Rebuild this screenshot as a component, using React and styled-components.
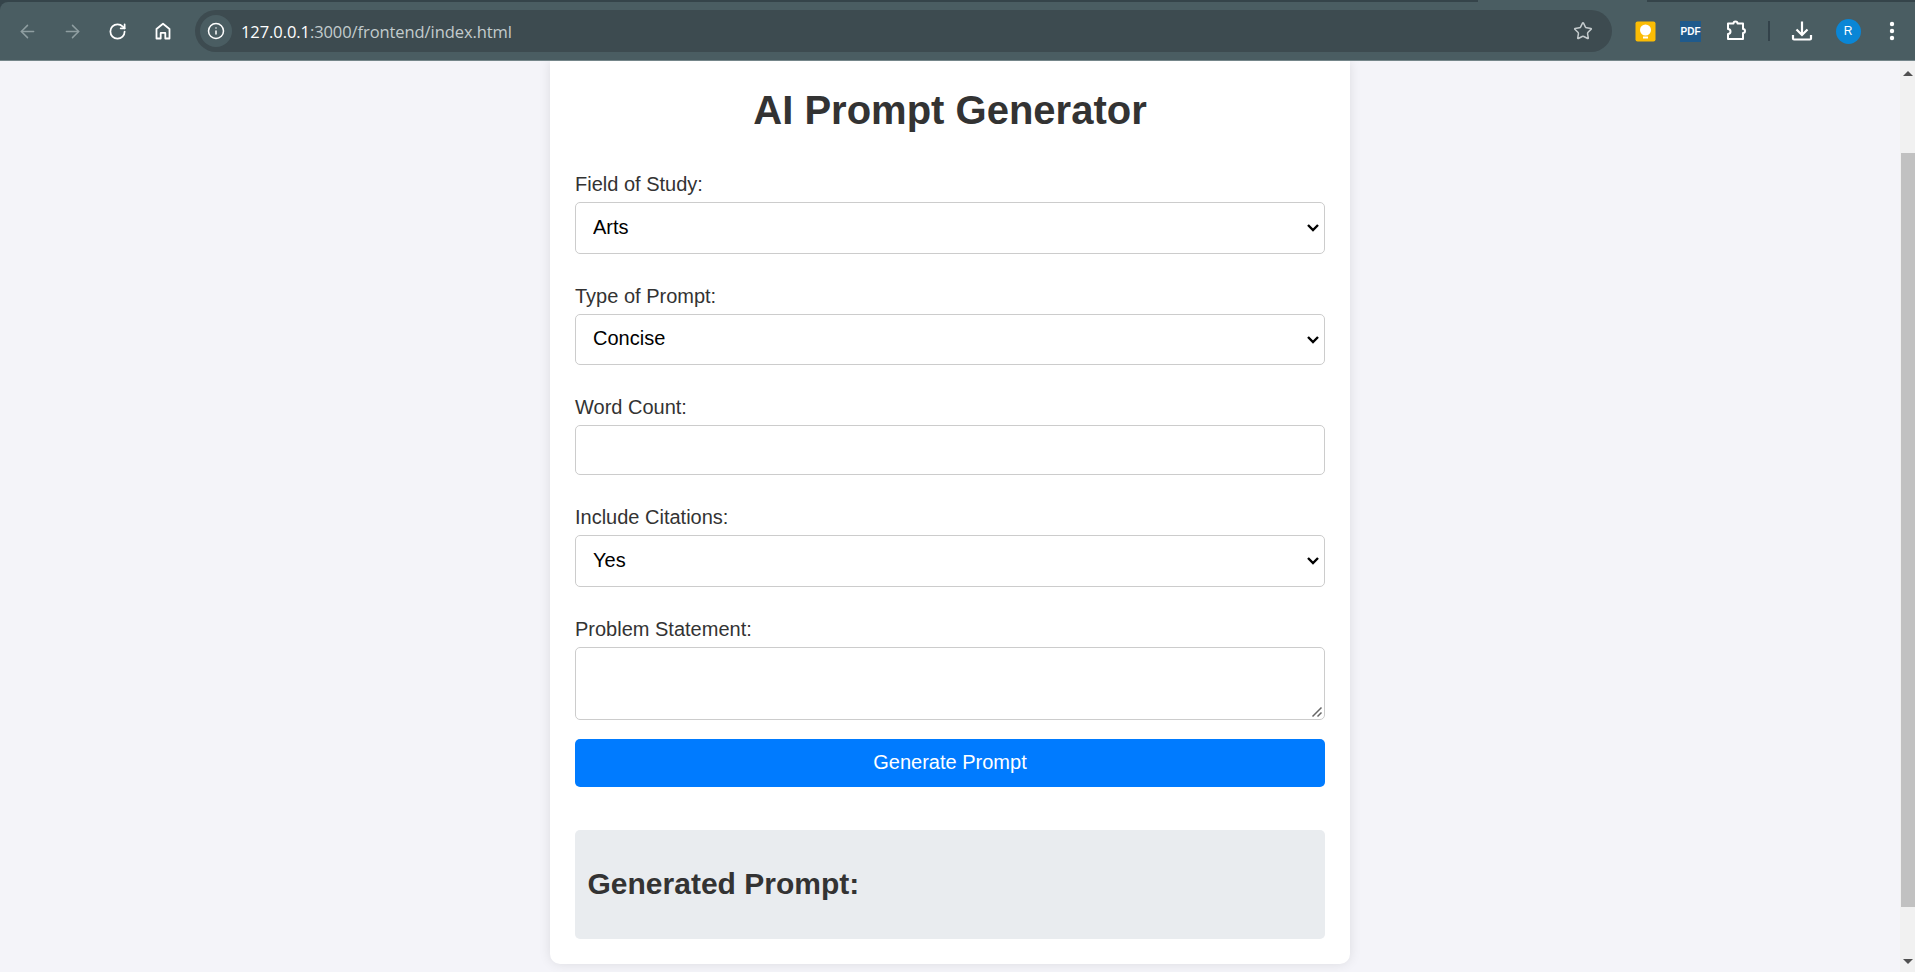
import React from "react";
import styled, { createGlobalStyle } from "styled-components";
import { ArrowLeft, ArrowRight, RotateCw, Info, Star } from "lucide-react";

const Global = createGlobalStyle`
  html, body { margin: 0; padding: 0; height: 100%; overflow: hidden; }
  body { font-family: "Liberation Sans", Arial, sans-serif; background: #f4f4f9; }
`;

const Shell = styled.div`
  height: 972px;
  display: flex;
  flex-direction: column;
  background: #35444a;
`;

const TopStrip = styled.div`
  height: 2px;
  flex: none;
  padding-left: 1478px;
`;

const TabGap = styled.div`
  width: 169px;
  height: 2px;
  background: #4a5d62;
`;

const Toolbar = styled.div`
  height: 59px;
  flex: none;
  box-sizing: border-box;
  background: #4a5d62;
  border-top-left-radius: 8px;
  border-bottom: 1px solid #75868a;
  display: flex;
  align-items: center;
  padding: 0 0 0 5px;
  color: #fff;
`;

const NavButton = styled.div`
  width: 45px;
  height: 36px;
  display: flex;
  align-items: center;
  justify-content: center;
  flex: none;
  color: ${(p) => (p.$dim ? "#8f9ea1" : "#fff")};
`;

const Omnibox = styled.div`
  flex: none;
  width: 1417px;
  height: 42px;
  margin-left: 10px;
  border-radius: 21px;
  background: #3d4b50;
  display: flex;
  align-items: center;
  padding: 0 16px 0 5px;
  box-sizing: border-box;
`;

const InfoChip = styled.div`
  width: 32px;
  height: 32px;
  border-radius: 50%;
  background: #4a5d62;
  display: flex;
  align-items: center;
  justify-content: center;
  flex: none;
`;

const Url = styled.div`
  margin-left: 9px;
  flex: 1;
  font-family: "Open Sans", "Liberation Sans", sans-serif;
  font-size: 16.5px;
  letter-spacing: -0.08px;
  color: #c3cbcd;
  span { color: #fff; }
`;

const StarWrap = styled.div`
  color: #c4cbcd;
  display: flex;
  margin-right: 3px;
`;

const Extensions = styled.div`
  display: flex;
  align-items: center;
  margin-left: 11px;
`;

const ExtSlot = styled.div`
  width: 45px;
  height: 36px;
  display: flex;
  align-items: center;
  justify-content: center;
  flex: none;
`;

const Divider = styled.div`
  width: 2px;
  height: 20px;
  background: #33424a;
  margin: 0 9px 0 10px;
`;

const PdfBadge = styled.div`
  width: 21px;
  height: 21px;
  background: #1f5a8c;
  color: #fff;
  font-size: 10px;
  font-weight: 700;
  display: flex;
  align-items: center;
  justify-content: center;
`;

const Avatar = styled.div`
  width: 25px;
  height: 25px;
  margin-left: 3px;
  border-radius: 50%;
  background: #0a86d6;
  color: #fff;
  font-size: 12px;
  display: flex;
  align-items: center;
  justify-content: center;
`;

const Body = styled.div`
  flex: 1;
  display: flex;
  min-height: 0;
`;

const Page = styled.main`
  flex: 1;
  display: flex;
  justify-content: center;
  align-items: flex-start;
  background: #f4f4f9;
  overflow: hidden;
`;

const Card = styled.div`
  width: 800px;
  box-sizing: border-box;
  padding: 0 25px 25px;
  background: #fff;
  border-radius: 0 0 10px 10px;
  box-shadow: 0 0 12px rgba(0, 0, 0, 0.1);
`;

const Title = styled.h1`
  margin: 26px 0 40px;
  height: 46px;
  line-height: 46px;
  text-align: center;
  font-size: 40px;
  color: #333;
`;

const Field = styled.div`
  margin-bottom: 31px;
  &:last-of-type { margin-bottom: 19px; }
`;

const Label = styled.label`
  display: block;
  height: 23px;
  line-height: 23px;
  margin-bottom: 6px;
  font-size: 20px;
  color: #333;
`;

const controlStyles = `
  display: block;
  width: 100%;
  box-sizing: border-box;
  border: 1px solid #ccc;
  border-radius: 5px;
  background: #fff;
  font-family: "Liberation Sans", Arial, sans-serif;
  font-size: 20px;
  color: #000;
`;

const ControlWrap = styled.div`
  position: relative;
`;

const Select = styled.select`
  ${controlStyles}
  appearance: none;
  height: 51.5px;
  padding: 0 17px 2px;
`;

const Caret = styled.svg`
  position: absolute;
  right: 5px;
  top: 21px;
  pointer-events: none;
`;

const Input = styled.input`
  ${controlStyles}
  height: 50px;
  padding: 0 18px;
`;

const TextArea = styled.textarea`
  ${controlStyles}
  height: 73px;
  padding: 12px 18px;
  resize: none;
`;

const Grip = styled.svg`
  position: absolute;
  right: 2px;
  bottom: 2px;
  pointer-events: none;
`;

const Submit = styled.button`
  display: block;
  width: 100%;
  height: 48px;
  border: 0;
  border-radius: 5px;
  background: #007bff;
  color: #fff;
  font-family: "Liberation Sans", Arial, sans-serif;
  font-size: 20px;
`;

const Result = styled.section`
  margin-top: 43px;
  height: 109px;
  box-sizing: border-box;
  padding: 0 12.5px;
  display: flex;
  align-items: center;
  background: #e9ecef;
  border-radius: 5px;
`;

const ResultTitle = styled.h2`
  margin: 0;
  font-size: 30px;
  color: #333;
`;

const Scrollbar = styled.div`
  width: 15px;
  flex: none;
  background: #f1f1f1;
  display: flex;
  flex-direction: column;
  align-items: center;
  padding-top: 10px;
  box-sizing: border-box;
`;

const ArrowUp = styled.div`
  width: 0;
  height: 0;
  border-left: 5px solid transparent;
  border-right: 5px solid transparent;
  border-bottom: 5px solid #505050;
  flex: none;
`;

const ArrowDown = styled.div`
  width: 0;
  height: 0;
  border-left: 5px solid transparent;
  border-right: 5px solid transparent;
  border-top: 5px solid #505050;
  flex: none;
  margin-top: 52px;
`;

const Thumb = styled.div`
  width: 14px;
  height: 754px;
  margin: 77px 0 0 1px;
  background: #c1c1c1;
  flex: none;
`;

const HomeIcon = () => (
  <svg width="20" height="20" viewBox="0 0 20 20" fill="none" stroke="#fff" strokeWidth="1.8" strokeLinejoin="round">
    <path d="M3.5 17.5V8L10 2.8 16.5 8v9.5h-4.2v-5.6H7.7v5.6z" />
  </svg>
);

const KeepIcon = () => (
  <svg width="21" height="21" viewBox="0 0 21 21">
    <rect x="0.5" y="0.5" width="20" height="20" rx="2" fill="#fbbc04" />
    <circle cx="10.5" cy="9" r="5.5" fill="#fff" />
    <rect x="8" y="15.5" width="5" height="2" fill="#fff" />
  </svg>
);

const PuzzleIcon = () => (
  <svg width="22" height="22" viewBox="0 0 22 22" fill="none" stroke="#fff" strokeWidth="2" strokeLinejoin="round">
    <path d="M3 3.5h5.5a2 2 0 0 1 4 0H18v5.5a2 2 0 0 1 0 4v6H3v-5a2.4 2.4 0 0 0 0-5z" />
  </svg>
);

const DownloadIcon = () => (
  <svg width="22" height="22" viewBox="0 0 22 22" fill="none" stroke="#fff" strokeWidth="2.2">
    <path d="M11 1.5v13M5.5 9.5 11 15l5.5-5.5" />
    <path d="M2 15v3.5a1 1 0 0 0 1 1h16a1 1 0 0 0 1-1V15" />
  </svg>
);

const MenuIcon = () => (
  <svg width="6" height="20" viewBox="0 0 6 20" fill="#fff">
    <circle cx="3" cy="3" r="2.2" />
    <circle cx="3" cy="10" r="2.2" />
    <circle cx="3" cy="17" r="2.2" />
  </svg>
);

const ChoiceField = ({ label, options }) => (
  <Field>
    <Label>{label}</Label>
    <ControlWrap>
      <Select defaultValue={options[0]}>
        {options.map((o) => (
          <option key={o}>{o}</option>
        ))}
      </Select>
      <Caret width="14" height="10" viewBox="0 0 14 10" fill="none" stroke="#000" strokeWidth="2.4">
        <path d="M2 2l5 5 5-5" />
      </Caret>
    </ControlWrap>
  </Field>
);

export default function App() {
  return (
    <Shell>
      <Global />
      <TopStrip><TabGap /></TopStrip>
      <Toolbar>
        <NavButton $dim><ArrowLeft size={21} strokeWidth={1.7} /></NavButton>
        <NavButton $dim><ArrowRight size={21} strokeWidth={1.7} /></NavButton>
        <NavButton><RotateCw size={19} strokeWidth={2.2} /></NavButton>
        <NavButton><HomeIcon /></NavButton>
        <Omnibox>
          <InfoChip><Info size={18} strokeWidth={2} /></InfoChip>
          <Url><span>127.0.0.1</span>:3000/frontend/index.html</Url>
          <StarWrap><Star size={20} strokeWidth={1.8} /></StarWrap>
        </Omnibox>
        <Extensions>
          <ExtSlot><KeepIcon /></ExtSlot>
          <ExtSlot><PdfBadge>PDF</PdfBadge></ExtSlot>
          <ExtSlot><PuzzleIcon /></ExtSlot>
          <Divider />
          <ExtSlot><DownloadIcon /></ExtSlot>
          <ExtSlot><Avatar>R</Avatar></ExtSlot>
          <ExtSlot><MenuIcon /></ExtSlot>
        </Extensions>
      </Toolbar>
      <Body>
        <Page>
          <Card>
            <Title>AI Prompt Generator</Title>
            <ChoiceField label="Field of Study:" options={["Arts", "Science"]} />
            <ChoiceField label="Type of Prompt:" options={["Concise", "Detailed"]} />
            <Field>
              <Label>Word Count:</Label>
              <Input type="number" />
            </Field>
            <ChoiceField label="Include Citations:" options={["Yes", "No"]} />
            <Field>
              <Label>Problem Statement:</Label>
              <ControlWrap>
                <TextArea />
                <Grip width="12" height="12" viewBox="0 0 12 12" stroke="#666" strokeWidth="1.5" fill="none">
                  <path d="M1.5 10.5 10.5 1.5M6.5 10.5l4-4" />
                </Grip>
              </ControlWrap>
            </Field>
            <Submit>Generate Prompt</Submit>
            <Result>
              <ResultTitle>Generated Prompt:</ResultTitle>
            </Result>
          </Card>
        </Page>
        <Scrollbar>
          <ArrowUp />
          <Thumb />
          <ArrowDown />
        </Scrollbar>
      </Body>
    </Shell>
  );
}
